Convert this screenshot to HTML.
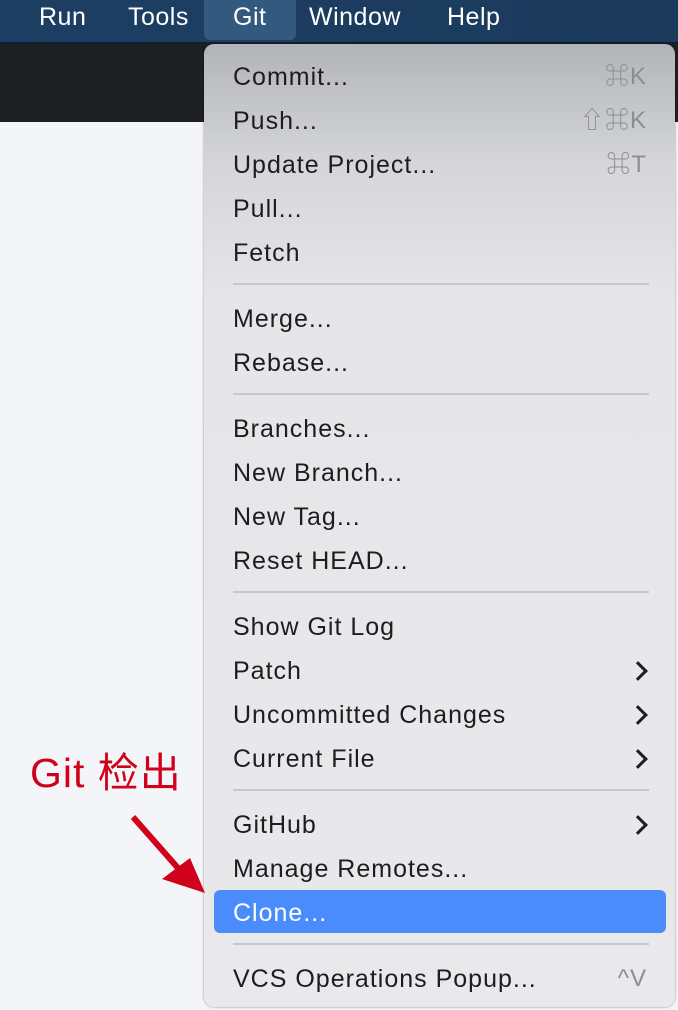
<!DOCTYPE html>
<html><head><meta charset="utf-8"><style>
body{margin:0;width:678px;height:1010px;overflow:hidden;background:#f4f5f8;font-family:"Liberation Sans","Noto Sans CJK SC",sans-serif;position:relative}
.bar{position:absolute;left:0;top:0;width:678px;height:42px;background:linear-gradient(90deg,#1d3f63,#1b3a5c);border-bottom:2px solid #0e1f33}
.bar span{position:absolute;top:3px;color:#fff;font-size:25px;letter-spacing:0.5px}
.git{position:absolute;left:204px;top:0;width:92px;height:40px;background:#33597f;border-radius:0 0 6px 6px}
.dark{position:absolute;left:0;top:44px;width:678px;height:78px;background:#1e1f22}
.menu{position:absolute;left:204px;top:44px;width:471px;height:963px;border-radius:10px;background:linear-gradient(180deg,#b2b4b8 0px,#d5d6d9 120px,#e6e6e8 260px,#e9e9eb 100%);box-shadow:0 0 2px rgba(0,0,0,.45)}
.it{position:absolute;left:29px;font-size:25px;letter-spacing:1px;color:#1d1d1f;line-height:30px;white-space:nowrap}
.sc{position:absolute;right:28px;font-size:24px;letter-spacing:1px;color:#8d8e91;line-height:30px}
.ch{position:absolute;right:30px;width:11px;height:11px;border-right:3px solid #1d1d1f;border-top:3px solid #1d1d1f;transform:rotate(45deg)}
.sep{position:absolute;left:29px;width:416px;height:2px;background:#c8c8cb}
.hl{position:absolute;left:10px;top:846px;width:452px;height:43px;background:#4a8cfb;border-radius:6px}
</style></head><body>
<div class="bar"><div class="git"></div>
<span style="left:39px">Run</span><span style="left:128px">Tools</span><span style="left:233px">Git</span><span style="left:309px">Window</span><span style="left:447px">Help</span></div>
<div class="dark"></div>
<div class="menu">
<div class="hl"></div>
<div class="it" style="top:18px">Commit...</div><div class="sc" style="top:18px">⌘K</div>
<div class="it" style="top:62px">Push...</div><div class="sc" style="top:62px">⇧⌘K</div>
<div class="it" style="top:106px">Update Project...</div><div class="sc" style="top:106px">⌘T</div>
<div class="it" style="top:150px">Pull...</div>
<div class="it" style="top:194px">Fetch</div>
<div class="sep" style="top:239px"></div>
<div class="it" style="top:260px">Merge...</div>
<div class="it" style="top:304px">Rebase...</div>
<div class="sep" style="top:349px"></div>
<div class="it" style="top:370px">Branches...</div>
<div class="it" style="top:414px">New Branch...</div>
<div class="it" style="top:458px">New Tag...</div>
<div class="it" style="top:502px">Reset HEAD...</div>
<div class="sep" style="top:547px"></div>
<div class="it" style="top:568px">Show Git Log</div>
<div class="it" style="top:612px">Patch</div><div class="ch" style="top:620px"></div>
<div class="it" style="top:656px">Uncommitted Changes</div><div class="ch" style="top:664px"></div>
<div class="it" style="top:700px">Current File</div><div class="ch" style="top:708px"></div>
<div class="sep" style="top:745px"></div>
<div class="it" style="top:766px">GitHub</div><div class="ch" style="top:774px"></div>
<div class="it" style="top:810px">Manage Remotes...</div>
<div class="it" style="top:854px;color:#fff">Clone...</div>
<div class="sep" style="top:899px"></div>
<div class="it" style="top:920px">VCS Operations Popup...</div><div class="sc" style="top:920px">^V</div>
</div>
<div style="position:absolute;left:30px;top:750px;font-size:41px;letter-spacing:1px;color:#d0021b;line-height:46px">Git 检出</div>
<svg style="position:absolute;left:0;top:0" width="678" height="1010"><line x1="133" y1="817" x2="185" y2="876" stroke="#d0021b" stroke-width="6"/><polygon points="205,893 162,879 190,858" fill="#d0021b"/></svg>
</body></html>
